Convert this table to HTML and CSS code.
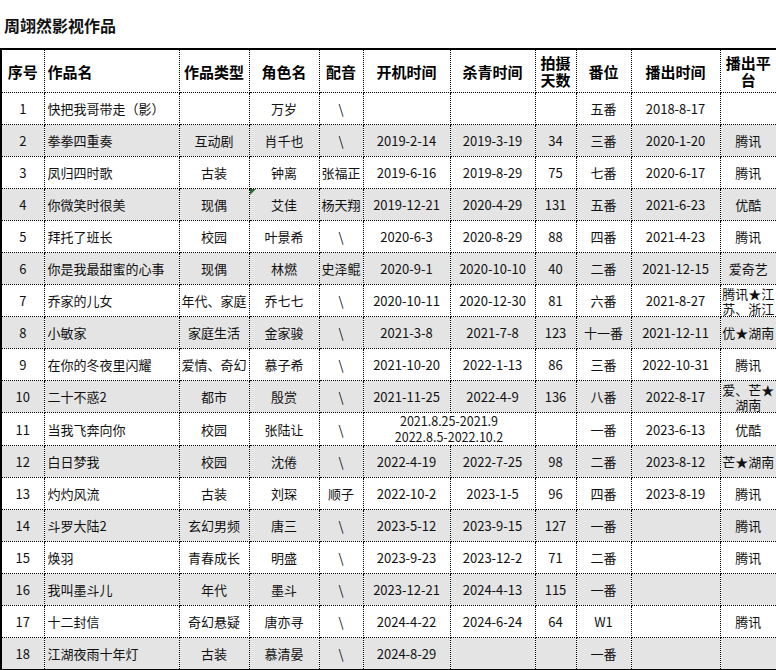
FILE: index.html
```html
<!DOCTYPE html>
<html lang="zh">
<head>
<meta charset="utf-8">
<link rel="stylesheet" href="styles.css">
</head>
<body>
<div class="title">周翊然影视作品</div>
<table class="works">
<colgroup>
<col class="c-no"><col class="c-name"><col class="c-type"><col class="c-role"><col class="c-dub"><col class="c-start"><col class="c-end"><col class="c-days"><col class="c-rank"><col class="c-air"><col class="c-plat">
</colgroup>
<thead>
<tr><th>序号</th><th class="left">作品名</th><th>作品类型</th><th>角色名</th><th>配音</th><th>开机时间</th><th>杀青时间</th><th>拍摄天数</th><th>番位</th><th>播出时间</th><th>播出平台</th></tr>
</thead>
<tbody>
<tr><td>1</td><td class="left">快把我哥带走（影）</td><td></td><td>万岁</td><td>\</td><td></td><td></td><td></td><td>五番</td><td>2018-8-17</td><td></td></tr>
<tr class="alt"><td>2</td><td class="left">拳拳四重奏</td><td>互动剧</td><td>肖千也</td><td>\</td><td>2019-2-14</td><td>2019-3-19</td><td>34</td><td>三番</td><td>2020-1-20</td><td>腾讯</td></tr>
<tr><td>3</td><td class="left">凤归四时歌</td><td>古装</td><td>钟离</td><td>张福正</td><td>2019-6-16</td><td>2019-8-29</td><td>75</td><td>七番</td><td>2020-6-17</td><td>腾讯</td></tr>
<tr class="alt"><td>4</td><td class="left">你微笑时很美</td><td>现偶</td><td class="flag">艾佳</td><td>杨天翔</td><td>2019-12-21</td><td>2020-4-29</td><td>131</td><td>五番</td><td>2021-6-23</td><td>优酷</td></tr>
<tr><td>5</td><td class="left">拜托了班长</td><td>校园</td><td>叶景希</td><td>\</td><td>2020-6-3</td><td>2020-8-29</td><td>88</td><td>四番</td><td>2021-4-23</td><td>腾讯</td></tr>
<tr class="alt"><td>6</td><td class="left">你是我最甜蜜的心事</td><td>现偶</td><td>林燃</td><td>史泽鲲</td><td>2020-9-1</td><td>2020-10-10</td><td>40</td><td>二番</td><td>2021-12-15</td><td>爱奇艺</td></tr>
<tr><td>7</td><td class="left">乔家的儿女</td><td>年代、家庭</td><td>乔七七</td><td>\</td><td>2020-10-11</td><td>2020-12-30</td><td>81</td><td>六番</td><td>2021-8-27</td><td class="plat2">腾讯★江苏、浙江</td></tr>
<tr class="alt"><td>8</td><td class="left">小敏家</td><td>家庭生活</td><td>金家骏</td><td>\</td><td>2021-3-8</td><td>2021-7-8</td><td>123</td><td>十一番</td><td>2021-12-11</td><td>优★湖南</td></tr>
<tr><td>9</td><td class="left">在你的冬夜里闪耀</td><td>爱情、奇幻</td><td>慕子希</td><td>\</td><td>2021-10-20</td><td>2022-1-13</td><td>86</td><td>三番</td><td>2022-10-31</td><td>腾讯</td></tr>
<tr class="alt"><td>10</td><td class="left">二十不惑2</td><td>都市</td><td>殷赏</td><td>\</td><td>2021-11-25</td><td>2022-4-9</td><td>136</td><td>八番</td><td>2022-8-17</td><td class="plat2">爱、芒★湖南</td></tr>
<tr><td>11</td><td class="left">当我飞奔向你</td><td>校园</td><td>张陆让</td><td>\</td><td colspan="2" class="merged">2021.8.25-2021.9<br>2022.8.5-2022.10.2</td><td></td><td>一番</td><td>2023-6-13</td><td>优酷</td></tr>
<tr class="alt"><td>12</td><td class="left">白日梦我</td><td>校园</td><td>沈倦</td><td>\</td><td>2022-4-19</td><td>2022-7-25</td><td>98</td><td>二番</td><td>2023-8-12</td><td>芒★湖南</td></tr>
<tr><td>13</td><td class="left">灼灼风流</td><td>古装</td><td>刘琛</td><td>顺子</td><td>2022-10-2</td><td>2023-1-5</td><td>96</td><td>四番</td><td>2023-8-19</td><td>腾讯</td></tr>
<tr class="alt"><td>14</td><td class="left">斗罗大陆2</td><td>玄幻男频</td><td>唐三</td><td>\</td><td>2023-5-12</td><td>2023-9-15</td><td>127</td><td>一番</td><td></td><td>腾讯</td></tr>
<tr><td>15</td><td class="left">焕羽</td><td>青春成长</td><td>明盛</td><td>\</td><td>2023-9-23</td><td>2023-12-2</td><td>71</td><td>二番</td><td></td><td>腾讯</td></tr>
<tr class="alt"><td>16</td><td class="left">我叫墨斗儿</td><td>年代</td><td>墨斗</td><td>\</td><td>2023-12-21</td><td>2024-4-13</td><td>115</td><td>一番</td><td></td><td></td></tr>
<tr><td>17</td><td class="left">十二封信</td><td>奇幻悬疑</td><td>唐亦寻</td><td>\</td><td>2024-4-22</td><td>2024-6-24</td><td>64</td><td>W1</td><td></td><td>腾讯</td></tr>
<tr class="alt"><td>18</td><td class="left">江湖夜雨十年灯</td><td>古装</td><td>慕清晏</td><td>\</td><td>2024-8-29</td><td></td><td></td><td>一番</td><td></td><td></td></tr>
</tbody>
</table>
</body>
</html>
```
FILE: styles.css
```css
html, body {
  margin: 0;
  padding: 0;
  background: #ffffff;
}
body {
  font-family: "Noto Sans CJK SC", "Noto Sans", sans-serif;
  color: #111;
  width: 776px;
}
.title {
  height: 48px;
  box-sizing: border-box;
  padding: 14px 0 0 4px;
  font-size: 16px;
  line-height: 22px;
  font-weight: bold;
}
.works {
  border-collapse: collapse;
  table-layout: fixed;
  width: 776px;
  border: 2px solid #000;
}
.c-no { width: 43px; }
.c-name { width: 135px; }
.c-type { width: 70px; }
.c-role { width: 70px; }
.c-dub { width: 44px; }
.c-start { width: 87px; }
.c-end { width: 85px; }
.c-days { width: 41px; }
.c-rank { width: 55px; }
.c-air { width: 89px; }
.c-plat { width: 57px; }
.works th, .works td {
  border: 1px dotted #000;
  padding: 0 1px;
  text-align: center;
  vertical-align: middle;
  overflow: hidden;
}
.works th {
  height: 42px;
  font-size: 15px;
  line-height: 17px;
  font-weight: bold;
  color: #000;
}
.works td {
  height: 31px;
  font-size: 13px;
  line-height: 15px;
  white-space: nowrap;
}
.works .left {
  text-align: left;
  padding-left: 3px;
}
.works tr.alt td {
  background: #e4e4e4;
}
.works td.plat2 {
  white-space: normal;
  line-height: 15px;
  padding: 0;
}
.works td.merged {
  white-space: normal;
  font-size: 12.5px;
  line-height: 16px;
}
.works td.flag {
  position: relative;
}
.works td.flag::before {
  content: "";
  position: absolute;
  left: 0;
  top: 0;
  width: 0;
  height: 0;
  border-top: 6px solid #2e6b2e;
  border-right: 6px solid transparent;
}
```
